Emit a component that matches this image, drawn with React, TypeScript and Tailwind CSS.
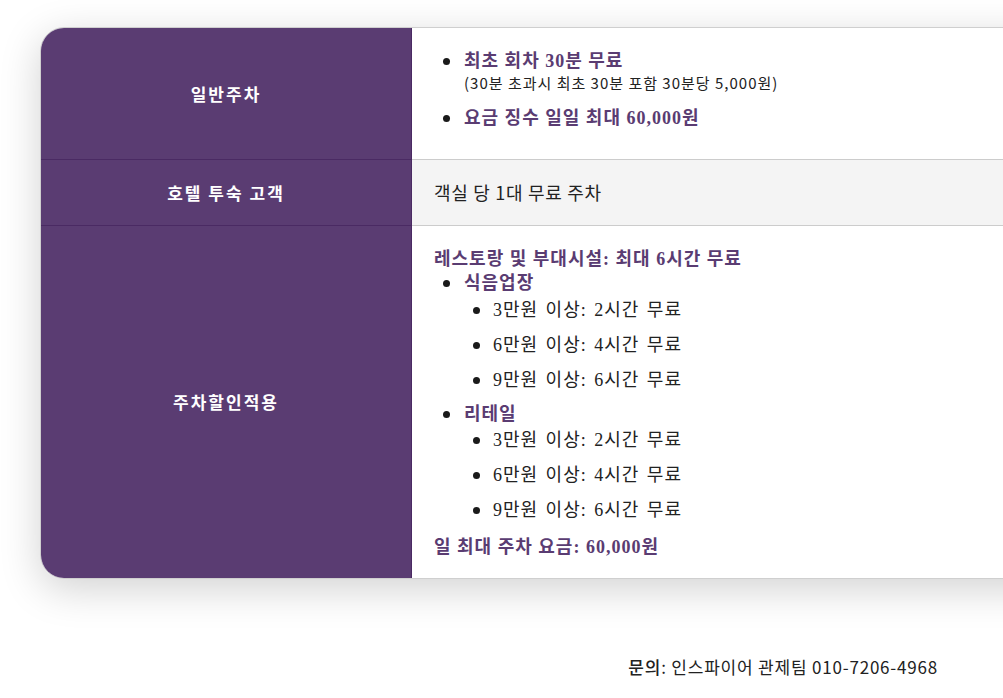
import React from "react";

const P = "text-[#5a3c72]";

function Dot({ w }: { w: string }) {
  return (
    <span className={`${w} shrink-0 h-[24px] flex items-center pl-[9px]`}>
      <span className="block w-[7px] h-[7px] rounded-full bg-[#1a1a1a]" />
    </span>
  );
}

function Sub({ text, mb }: { text: string; mb: string }) {
  return (
    <li className={`flex leading-[24px] ${mb} [word-spacing:2px]`}>
      <Dot w="w-[29px]" />
      <span>{text}</span>
    </li>
  );
}

export default function App() {
  const serif = { fontFamily: '"Liberation Serif", "Noto Sans CJK KR", serif' } as React.CSSProperties;
  return (
    <div className="w-[1003px] h-[698px] overflow-hidden bg-white relative font-['Noto_Sans_CJK_KR',sans-serif]">
      <div className="pl-[40px] pt-[27px]">
        <div className="w-[1100px] rounded-[24px] overflow-hidden border border-[#cfcfcf] shadow-[0_10px_40px_rgba(0,0,0,0.18)]">
          {/* Row 1 */}
          <div className="flex h-[132px] border-b border-[#cccccc]">
            <div className="w-[371px] shrink-0 bg-[#5a3c72] border-r border-[#4a2a63] border-b border-b-[#4a2a63] -mb-px flex items-center justify-center text-white font-bold text-[17px] tracking-[2px]">
              일반주차
            </div>
            <div className="flex-1 bg-white pt-[21px] px-[22px]" style={serif}>
              <ul className="text-[18px]">
                <li className="flex mb-[13px]">
                  <Dot w="w-[30px]" />
                  <div>
                    <div className={`${P} font-bold text-[18px] leading-[24px] tracking-[1px]`}>최초 회차 30분 무료</div>
                    <div className="text-[15px] leading-[20px] text-[#222] tracking-[1px] font-['Noto_Sans_CJK_KR',sans-serif]">(30분 초과시 최초 30분 포함 30분당 5,000원)</div>
                  </div>
                </li>
                <li className={`flex ${P} font-bold text-[18px] leading-[24px] tracking-[1px]`}>
                  <Dot w="w-[30px]" />
                  <span>요금 징수 일일 최대 60,000원</span>
                </li>
              </ul>
            </div>
          </div>
          {/* Row 2 */}
          <div className="flex h-[66px] border-b border-[#cccccc]">
            <div className="w-[371px] shrink-0 bg-[#5a3c72] border-r border-[#4a2a63] border-b border-b-[#4a2a63] -mb-px flex items-center justify-center text-white font-bold text-[17px] tracking-[2px]">
              호텔 투숙 고객
            </div>
            <div className="flex-1 bg-[#f4f4f4] flex items-center px-[22px] text-[18px] tracking-[0.7px] text-[#222]">
              객실 당 1대 무료 주차
            </div>
          </div>
          {/* Row 3 */}
          <div className="flex h-[352px]">
            <div className="w-[371px] shrink-0 bg-[#5a3c72] border-r border-[#4a2a63] flex items-center justify-center text-white font-bold text-[17px] tracking-[2px]">
              주차할인적용
            </div>
            <div className="flex-1 bg-white pt-[21px] px-[22px] text-[#222] tracking-[1px]" style={serif}>
              <div className={`${P} font-bold text-[18px] leading-[24px]`}>레스토랑 및 부대시설: 최대 6시간 무료</div>
              <ul className="text-[18px]">
                <li className="flex">
                  <Dot w="w-[30px]" />
                  <div>
                    <div className={`${P} font-bold text-[18px] leading-[24px]`}>식음업장</div>
                    <ul className="mt-[3px] text-[18px]">
                      <Sub text="3만원 이상: 2시간 무료" mb="mb-[11px]" />
                      <Sub text="6만원 이상: 4시간 무료" mb="mb-[11px]" />
                      <Sub text="9만원 이상: 6시간 무료" mb="mb-[10px]" />
                    </ul>
                  </div>
                </li>
                <li className="flex">
                  <Dot w="w-[30px]" />
                  <div>
                    <div className={`${P} font-bold text-[18px] leading-[24px]`}>리테일</div>
                    <ul className="mt-[2px] text-[18px]">
                      <Sub text="3만원 이상: 2시간 무료" mb="mb-[11px]" />
                      <Sub text="6만원 이상: 4시간 무료" mb="mb-[11px]" />
                      <Sub text="9만원 이상: 6시간 무료" mb="mb-[11px]" />
                    </ul>
                  </div>
                </li>
              </ul>
              <div className={`${P} font-bold text-[18px] leading-[24px] mt-[2px]`}>일 최대 주차 요금: 60,000원</div>
            </div>
          </div>
        </div>
      </div>
      <div className="flex justify-end pr-[65px] mt-[76px] text-[17px] leading-[24px] tracking-[0.8px] text-[#222]">
        <span><span className="font-medium">문의</span>: 인스파이어 관제팀 010-7206-4968</span>
      </div>
    </div>
  );
}
